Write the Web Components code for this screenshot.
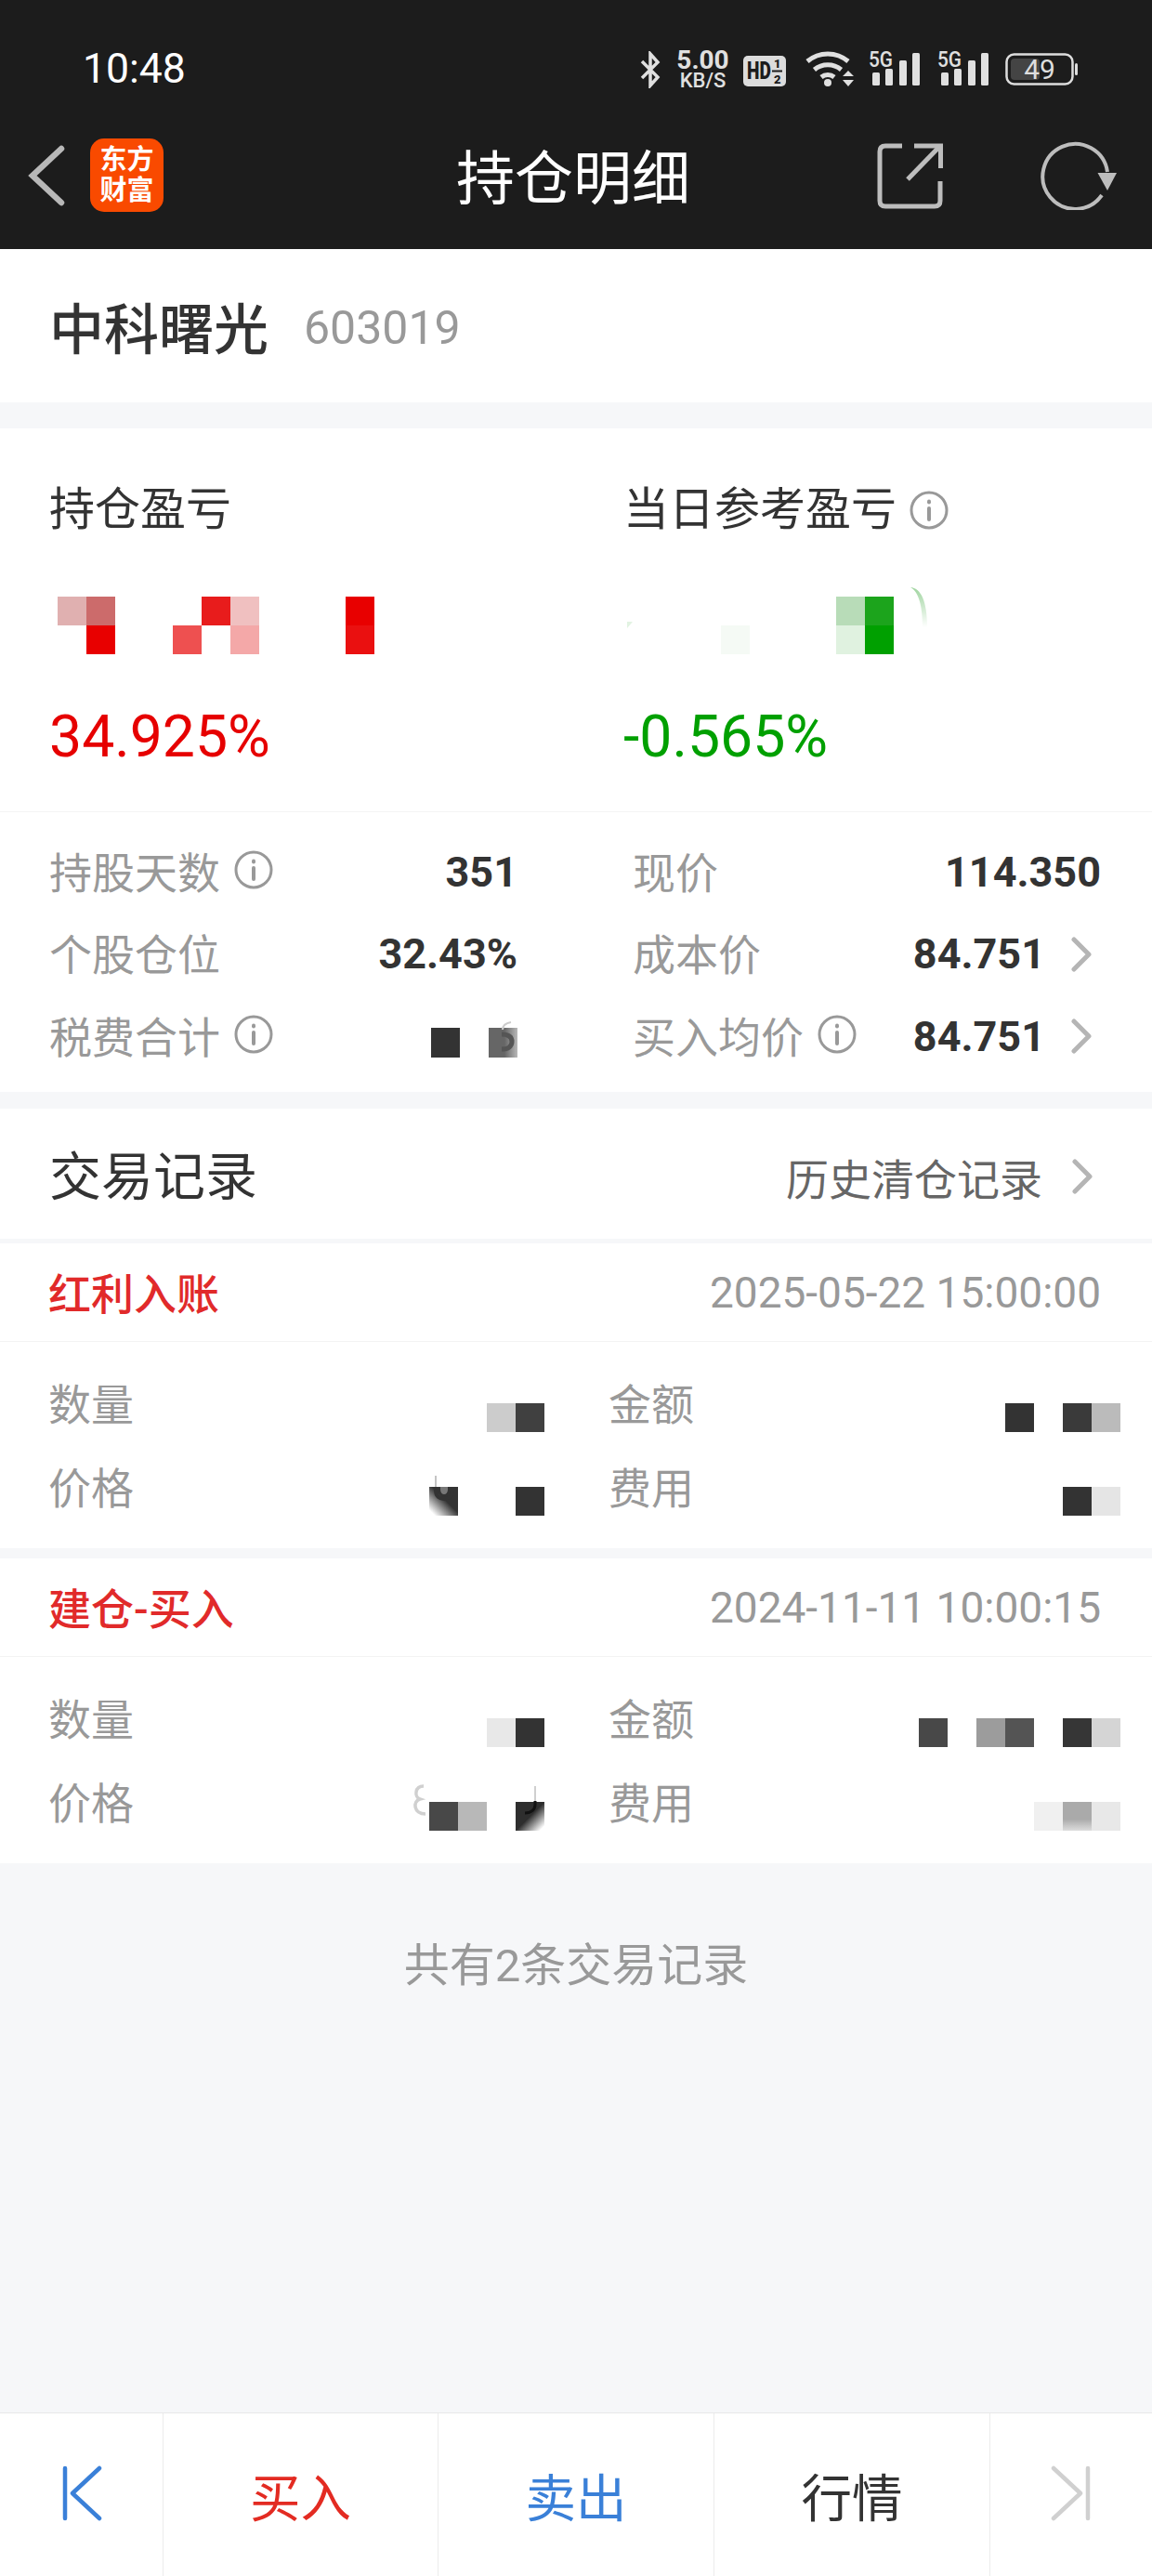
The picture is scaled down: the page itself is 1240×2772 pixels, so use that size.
<!DOCTYPE html>
<html lang="zh">
<head>
<meta charset="utf-8">
<title>持仓明细</title>
<style>
  html, body { margin: 0; padding: 0; }
  body {
    width: 1240px;
    height: 2772px;
    display: flex;
    flex-direction: column;
    background: #f6f7f9;
    font-family: Roboto, "Noto Sans CJK SC", sans-serif;
    color: #333;
  }
  bottom-bar { margin-top: auto; }
</style>
</head>
<body>
  <status-bar></status-bar>
  <nav-bar>持仓明细</nav-bar>
  <stock-title code="603019">中科曙光</stock-title>

  <pnl-card>
    <pnl-figure slot="figures" label="持仓盈亏" percent="34.925%" color="#e60000">
      <mask-blocks style="margin-left:9px" cols="12"
        cells="0 0 #e0b0b0; 1 0 #cc6b6b; 1 1 #e80000; 4 1 #ee5050; 5 0 #e81c1c; 6 0 #f0c0c0; 6 1 #f4a8a8; 10 0 #e80000; 10 1 #ea1010"></mask-blocks>
    </pnl-figure>
    <pnl-figure slot="figures" label="当日参考盈亏" info percent="-0.565%" color="#00a000">
      <mask-blocks style="margin-left:105px" cols="6"
        cells="0 1 #f5faf5; 4 0 #b8dcb8; 4 1 #e0f2e0; 5 0 #1ca41c; 5 1 #00a000">
        <svg style="left:203px;top:-10px" width="20" height="44" viewBox="0 0 20 44">
          <defs><linearGradient id="fade" x1="0" y1="0" x2="0" y2="1"><stop offset="0" stop-color="#9fd49f"/><stop offset="1" stop-color="#fff"/></linearGradient></defs>
          <path d="M1 0C12 1 19 14 19 43L14 43C14 20 10 5 1 0Z" fill="url(#fade)"/>
        </svg>
        <svg style="left:-101px;top:26px" width="16" height="12" viewBox="0 0 16 12">
          <path d="M0 1H6L0 8Z" fill="#e2f3e2"/>
        </svg>
      </mask-blocks>
    </pnl-figure>

    <stat-row slot="stats" label="持股天数" info>351</stat-row>
    <stat-row slot="stats" label="现价">114.350</stat-row>
    <stat-row slot="stats" label="个股仓位">32.43%</stat-row>
    <stat-row slot="stats" label="成本价" arrow>84.751</stat-row>
    <stat-row slot="stats" label="税费合计" info>
      <mask-blocks style="margin-top:14px" cols="3" cell-h="32"
        cells="0 0 #333; 2 0 linear-gradient(to right,#666 55%,#b8b8b8)">
        <svg style="left:66px;top:-7px" width="26" height="38" viewBox="0 0 26 38">
          <path d="M20 1C14 2 11 5 11 9" fill="none" stroke="#ccc" stroke-width="2"/>
          <path d="M10 14C19 14 21 18 21 22C21 27 17 30 10 30" fill="none" stroke="#555" stroke-width="5"/>
        </svg>
      </mask-blocks>
    </stat-row>
    <stat-row slot="stats" label="买入均价" info arrow>84.751</stat-row>
  </pnl-card>

  <trade-header></trade-header>

  <trade-record name="红利入账" time="2025-05-22 15:00:00" style="margin-top:5px">
    <record-cell label="数量"><mask-blocks cols="2" cells="0 0 #ccc; 1 0 #404040"></mask-blocks></record-cell>
    <record-cell label="金额"><mask-blocks cols="4" cells="0 0 #333; 2 0 #3a3a3a; 3 0 #bbb"></mask-blocks></record-cell>
    <record-cell label="价格">
      <mask-blocks cols="4" cells="0 0 linear-gradient(to bottom left,#333 45%,#fff 90%); 3 0 #333">
        <svg style="left:5px;top:-13px" width="22" height="34" viewBox="0 0 22 34">
          <path d="M7 13H15V16C15 19 13 21 11 21C9 21 7 19 7 16Z" fill="#777"/>
          <path d="M2 1V13" fill="none" stroke="#c4c4c4" stroke-width="2"/>
          <path d="M2 13V17C2 23 6 26 11 26C16 26 20 23 20 17V13" fill="none" stroke="#333" stroke-width="4"/>
        </svg>
      </mask-blocks>
    </record-cell>
    <record-cell label="费用"><mask-blocks cols="2" cells="0 0 #333; 1 0 #e5e5e5"></mask-blocks></record-cell>
  </trade-record>

  <trade-record name="建仓-买入" time="2024-11-11 10:00:15" style="margin-top:11px">
    <record-cell label="数量"><mask-blocks cols="2" cells="0 0 #e8e8e8; 1 0 #333"></mask-blocks></record-cell>
    <record-cell label="金额"><mask-blocks cols="7" cells="0 0 #484848; 2 0 #9c9c9c; 3 0 #545454; 5 0 #363636; 6 0 #d5d5d5"></mask-blocks></record-cell>
    <record-cell label="价格">
      <mask-blocks cols="4" cells="0 0 #484848; 1 0 #b8b8b8; 3 0 linear-gradient(to bottom right,#2e2e2e 50%,#fff 92%)">
        <svg style="left:-20px;top:-19px" width="18" height="34" viewBox="0 0 18 34">
          <path d="M14 2C4 2 4 14 10 16C2 18 3 32 16 32" fill="none" stroke="#d0d0d0" stroke-width="3.5"/>
        </svg>
        <svg style="left:100px;top:-18px" width="18" height="34" viewBox="0 0 18 34">
          <path d="M14 1V17" fill="none" stroke="#cfcfcf" stroke-width="2"/>
          <path d="M14 17V21C14 26 10 30 3 30" fill="none" stroke="#111" stroke-width="3"/>
        </svg>
      </mask-blocks>
    </record-cell>
    <record-cell label="费用"><mask-blocks cols="3" cells="0 0 #f0f0f0; 1 0 linear-gradient(#aaa 60%,#ddd); 2 0 #e8e8e8"></mask-blocks></record-cell>
  </trade-record>

  <record-note>共有2条交易记录</record-note>
  <bottom-bar></bottom-bar>

<script>
// grey pixel mosaic used where the screenshot has its amounts hidden
class MaskBlocks extends HTMLElement {
  connectedCallback() {
    const cols = this.getAttribute('cols');
    const h = this.getAttribute('cell-h') || 31;
    const cells = this.getAttribute('cells').split(';').map((c) => {
      const [col, row, ...bg] = c.trim().split(' ');
      return `<i style="grid-column:${+col + 1};grid-row:${+row + 1};background:${bg.join(' ')}"></i>`;
    }).join('');
    this.attachShadow({ mode: 'open' }).innerHTML = `
      <style>
      :host { display: block; position: relative; width: max-content; }
      .grid { display: grid; grid-template-columns: repeat(${cols}, 31px); grid-auto-rows: ${h}px; }
      ::slotted(svg) { position: absolute; }
      </style>
      <div class="grid">${cells}</div>
      <slot></slot>
    `;
  }
}

class InfoIcon extends HTMLElement {
  constructor() {
    super();
    this.attachShadow({ mode: 'open' }).innerHTML = `
      <style>:host { display: inline-flex; width: 42px; height: 42px; flex: none; }</style>
      <svg width="42" height="42" viewBox="0 0 42 42" fill="none" stroke="#999">
        <circle cx="21" cy="21" r="19" stroke-width="3"/>
        <path d="M21 19V31" stroke-width="4" stroke-linecap="round"/>
        <path d="M21 11.5V12.5" stroke-width="4" stroke-linecap="round"/>
      </svg>
    `;
  }
}

class ChevronIcon extends HTMLElement {
  constructor() {
    super();
    this.attachShadow({ mode: 'open' }).innerHTML = `
      <style>:host { display: inline-flex; width: 22px; height: 38px; flex: none; }</style>
      <svg width="22" height="38" viewBox="0 0 22 38" fill="none" stroke="#b5b5b5" stroke-width="5" stroke-linecap="round" stroke-linejoin="round">
        <path d="M3 3L19 19L3 35"/>
      </svg>
    `;
  }
}

class StatusBar extends HTMLElement {
  constructor() {
    super();
    const signal = `
      <text x="0" y="19" font-size="24" font-weight="500" textLength="26" lengthAdjust="spacingAndGlyphs">5G</text>
      <rect x="4" y="25" width="8" height="14" rx="1.5"/>
      <rect x="18" y="21" width="8" height="18" rx="1.5"/>
      <rect x="33" y="12" width="8" height="27" rx="1.5"/>
      <rect x="47" y="4" width="8" height="35" rx="1.5"/>`;
    this.attachShadow({ mode: 'open' }).innerHTML = `
      <style>
      :host { display: flex; height: 120px; box-sizing: border-box; padding: 53px 79px 0 89px; background: #1c1c1c; color: #fff; }
      .time { font-size: 44.5px; line-height: 42px; flex: 1; }
      .icons { display: flex; align-items: flex-start; font-family: Roboto, sans-serif; color: #e0e0e0; }
      svg { display: block; flex: none; fill: #e0e0e0; font-family: Roboto, sans-serif; }
      .speed { width: 57px; margin: 0 15px 0 16px; text-align: center; }
      .speed b { display: block; font-weight: 700; font-size: 28px; line-height: 24px; }
      .speed span { display: block; font-weight: 500; font-size: 22px; line-height: 20px; }
      </style>
      <div class="time">10:48</div>
      <div class="icons">
        <svg style="margin-top:2px" width="24" height="40" viewBox="0 0 24 40">
          <path d="M3 11L20 28L12 37V3L20 12L3 29" fill="none" stroke="#e0e0e0" stroke-width="3.5"/>
        </svg>
        <div class="speed"><b>5.00</b><span>KB/S</span></div>
        <svg style="margin-top:7px" width="46" height="33" viewBox="0 0 46 33">
          <rect width="46" height="33" rx="5" fill="#dcdcdc"/>
          <g fill="#1c1c1c" font-weight="900">
            <text transform="translate(4 25) scale(.87 1.14)" font-size="22">HD</text>
            <text x="33" y="13" font-size="13">1</text>
            <text x="33" y="30" font-size="13">2</text>
          </g>
          <path d="M31 16.5H42" stroke="#1c1c1c" stroke-width="2"/>
        </svg>
        <svg style="margin:0 0 0 21px" width="52" height="42" viewBox="0 0 52 42">
          <g fill="none" stroke="#e0e0e0" stroke-width="5">
            <path d="M2 13A34 34 0 0 1 46 13"/>
            <path d="M9.5 22A23 23 0 0 1 38.5 22"/>
            <path d="M17 30A11 11 0 0 1 31 30"/>
          </g>
          <circle cx="24" cy="36" r="4"/>
          <path d="M40 29L46 23L52 29ZM40 33L46 40L52 33Z"/>
        </svg>
        <svg style="margin:-6px 0 0 16px" width="55" height="48" viewBox="0 -6 55 48">${signal}</svg>
        <svg style="margin:-6px 0 0 19px" width="55" height="48" viewBox="0 -6 55 48">${signal}</svg>
        <svg style="margin:4px 0 0 18px" width="79" height="36" viewBox="0 0 79 36">
          <rect x="1.5" y="1.5" width="71" height="32" rx="8" fill="none" stroke="#ddd" stroke-width="2.5"/>
          <rect x="6" y="6" width="31" height="23" rx="4" fill="#444"/>
          <rect x="75" y="11" width="3" height="13" rx="1.5" fill="#ddd"/>
          <text x="37" y="28" font-size="30" text-anchor="middle" fill="#ddd">49</text>
        </svg>
      </div>
    `;
  }
}

class NavBar extends HTMLElement {
  constructor() {
    super();
    this.attachShadow({ mode: 'open' }).innerHTML = `
      <style>
      :host { display: grid; grid-template-columns: 1fr auto 1fr; align-items: center; height: 148px; box-sizing: border-box; padding: 0 36px 11px 30px; background: #1c1c1c; color: #fff; }
      .left { display: flex; align-items: center; gap: 27px; }
      .logo { width: 79px; height: 79px; border-radius: 15px; background: #f94a00; color: #fff; font-size: 29px; line-height: 33px; font-weight: 700; text-align: center; display: flex; align-items: center; justify-content: center; }
      .title { font-size: 63px; line-height: 80px; margin-top: 9px; }
      .right { display: flex; align-items: center; justify-content: flex-end; gap: 105px; }
      svg { display: block; flex: none; }
      </style>
      <div class="left">
        <svg width="40" height="72" viewBox="0 0 40 72" fill="none" stroke="#b8b8b8" stroke-width="6.5" stroke-linecap="round">
          <path d="M36 7L5 36L36 65"/>
        </svg>
        <div class="logo"><span>东方<br>财富</span></div>
      </div>
      <div class="title"><slot></slot></div>
      <div class="right">
        <svg width="72" height="72" viewBox="0 0 72 72" fill="none" stroke="#bdbdbd" stroke-width="5">
          <path d="M28 4H10Q4 4 4 10V63Q4 69 10 69H63Q69 69 69 63V42"/>
          <path d="M34 40L69 4"/>
          <path d="M41 4H69.5V28"/>
        </svg>
        <svg width="84" height="74" viewBox="0 0 84 74" fill="none" stroke="#bdbdbd" stroke-width="4">
          <path d="M66 58A35 35 0 1 1 72 33"/>
          <path d="M61.5 34H82L72 53Z" fill="#bdbdbd" stroke="none"/>
        </svg>
      </div>
    `;
  }
}

class StockTitle extends HTMLElement {
  connectedCallback() {
    this.attachShadow({ mode: 'open' }).innerHTML = `
      <style>
      :host { display: flex; align-items: center; height: 165px; box-sizing: border-box; padding: 5px 0 0 53px; margin-bottom: 28px; background: #fff; }
      .name { font-size: 59px; font-weight: 500; color: #333; margin-top: -6px; }
      .code { font-size: 50px; margin-left: 38px; color: #999; }
      </style>
      <span class="name"><slot></slot></span>
      <span class="code">${this.getAttribute('code')}</span>
    `;
  }
}

class PnlCard extends HTMLElement {
  constructor() {
    super();
    this.attachShadow({ mode: 'open' }).innerHTML = `
      <style>
      :host { display: block; background: #fff; height: 714px; }
      .top { display: grid; grid-template-columns: 618px 1fr; height: 413px; box-sizing: border-box; padding-left: 53px; border-bottom: 1px solid #f4f4f4; }
      .stats { display: grid; grid-template-columns: 504px 504px; column-gap: 124px; grid-auto-rows: 88.5px; padding: 20px 0 0 53px; }
      </style>
      <div class="top"><slot name="figures"></slot></div>
      <div class="stats"><slot name="stats"></slot></div>
    `;
  }
}

class PnlFigure extends HTMLElement {
  connectedCallback() {
    const info = this.hasAttribute('info') ? '<info-icon></info-icon>' : '';
    this.attachShadow({ mode: 'open' }).innerHTML = `
      <style>
      :host { display: block; padding-top: 58px; }
      .label { display: flex; align-items: center; gap: 14px; font-size: 49px; line-height: 60px; color: #333; }
      .mask { height: 62px; margin-top: 63px; }
      .percent { font-size: 62.5px; line-height: 80px; margin-top: 49px; color: ${this.getAttribute('color')}; }
      </style>
      <div class="label">${this.getAttribute('label')}${info}</div>
      <div class="mask"><slot></slot></div>
      <div class="percent">${this.getAttribute('percent')}</div>
    `;
  }
}

class StatRow extends HTMLElement {
  connectedCallback() {
    const info = this.hasAttribute('info') ? '<info-icon></info-icon>' : '';
    const arrow = this.hasAttribute('arrow') ? '<chevron-icon></chevron-icon>' : '';
    this.attachShadow({ mode: 'open' }).innerHTML = `
      <style>
      :host { display: flex; align-items: center; justify-content: space-between; }
      .label { display: flex; align-items: center; gap: 15px; font-size: 46px; color: #999; margin-top: -5px; }
      .value { display: flex; align-items: center; font-size: 45px; font-weight: 700; color: #333; }
      chevron-icon { margin: 0 10px 0 28px; }
      </style>
      <div class="label">${this.getAttribute('label')}${info}</div>
      <div class="value"><slot></slot>${arrow}</div>
    `;
  }
}

class TradeHeader extends HTMLElement {
  constructor() {
    super();
    this.attachShadow({ mode: 'open' }).innerHTML = `
      <style>
      :host { display: flex; align-items: center; justify-content: space-between; height: 140px; margin-top: 18px; padding: 0 64px 0 53px; background: #fff; }
      .title { font-size: 56px; color: #333; margin-top: -4px; }
      .link { display: flex; align-items: center; font-size: 46px; color: #666; margin-top: 5px; }
      chevron-icon { margin-left: 32px; }
      </style>
      <div class="title">交易记录</div>
      <div class="link">历史清仓记录<chevron-icon></chevron-icon></div>
    `;
  }
}

class TradeRecord extends HTMLElement {
  connectedCallback() {
    this.attachShadow({ mode: 'open' }).innerHTML = `
      <style>
      :host { display: block; background: #fff; }
      .head { display: flex; align-items: center; justify-content: space-between; height: 105px; padding: 0 55px 0 52px; border-bottom: 1px solid #f3f3f3; }
      .name { font-size: 46px; font-weight: 500; color: #e12a2a; margin-top: -3px; }
      .time { font-size: 46px; color: #999; }
      .body { display: grid; grid-template-columns: 534px 551px; column-gap: 69px; grid-auto-rows: 90px; height: 222px; box-sizing: border-box; padding: 22px 0 0 52px; }
      </style>
      <div class="head">
        <span class="name">${this.getAttribute('name')}</span>
        <span class="time">${this.getAttribute('time')}</span>
      </div>
      <div class="body"><slot></slot></div>
    `;
  }
}

class RecordCell extends HTMLElement {
  connectedCallback() {
    this.attachShadow({ mode: 'open' }).innerHTML = `
      <style>
      :host { display: flex; align-items: center; justify-content: space-between; }
      .label { font-size: 46px; color: #999; margin-top: -6px; }
      .value { margin-top: 28px; }
      </style>
      <div class="label">${this.getAttribute('label')}</div>
      <div class="value"><slot></slot></div>
    `;
  }
}

class RecordNote extends HTMLElement {
  constructor() {
    super();
    this.attachShadow({ mode: 'open' }).innerHTML = `
      <style>
      :host { display: block; padding-top: 81px; text-align: center; font-size: 49px; line-height: 60px; color: #999; }
      </style>
      <slot></slot>
    `;
  }
}

class BottomBar extends HTMLElement {
  constructor() {
    super();
    this.attachShadow({ mode: 'open' }).innerHTML = `
      <style>
      :host { display: grid; grid-template-columns: 175px 296px 297px 297px 175px; height: 175px; background: #fff; border-top: 1px solid #e8e8e8; }
      div { display: flex; align-items: center; justify-content: center; font-size: 54.5px; border-left: 1px solid #ececec; }
      div:first-of-type { border-left: 0; }
      svg { display: block; margin-top: -4px; }
      </style>
      <div>
        <svg width="46" height="60" viewBox="0 0 46 60" fill="none" stroke="#3a80d8" stroke-width="4.5" stroke-linecap="round" stroke-linejoin="round">
          <path d="M5 3V57"/><path d="M42 3L13 30L42 57"/>
        </svg>
      </div>
      <div style="color:#e32b22">买入</div>
      <div style="color:#3a80d8">卖出</div>
      <div style="color:#333">行情</div>
      <div>
        <svg width="46" height="60" viewBox="0 0 46 60" fill="none" stroke="#d0d0d0" stroke-width="4.5" stroke-linecap="round" stroke-linejoin="round">
          <path d="M41 3V57"/><path d="M4 3L33 30L4 57"/>
        </svg>
      </div>
    `;
  }
}

customElements.define('mask-blocks', MaskBlocks);
customElements.define('info-icon', InfoIcon);
customElements.define('chevron-icon', ChevronIcon);
customElements.define('status-bar', StatusBar);
customElements.define('nav-bar', NavBar);
customElements.define('stock-title', StockTitle);
customElements.define('pnl-card', PnlCard);
customElements.define('pnl-figure', PnlFigure);
customElements.define('stat-row', StatRow);
customElements.define('trade-header', TradeHeader);
customElements.define('trade-record', TradeRecord);
customElements.define('record-cell', RecordCell);
customElements.define('record-note', RecordNote);
customElements.define('bottom-bar', BottomBar);
</script>
</body>
</html>
